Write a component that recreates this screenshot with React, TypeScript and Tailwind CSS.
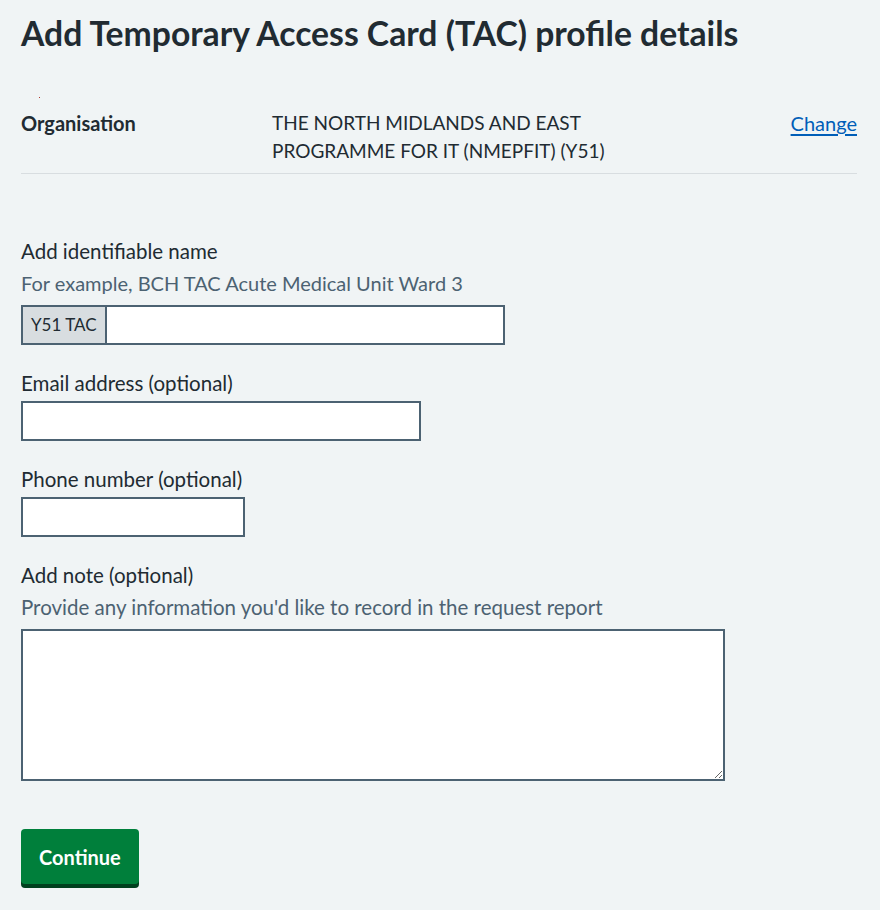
import type { ReactNode } from 'react';

const FONT = 'font-["Lato","Liberation_Sans",Arial,sans-serif]';

function Field({
  label,
  hint,
  hintClass = 'text-[20.5px]',
  children,
}: {
  label: string;
  hint?: string;
  hintClass?: string;
  children: ReactNode;
}) {
  return (
    <div className="mb-[24px]">
      <label className="mb-[4px] block text-[20.5px] leading-[28px] text-[#212b32]">{label}</label>
      {hint && <div className={`mb-[8px] leading-[28px] text-[#4c6272] ${hintClass}`}>{hint}</div>}
      {children}
    </div>
  );
}

export default function App() {
  return (
    <div className={`${FONT} min-h-[910px] bg-[#f0f4f5] pl-[21px] pr-[23px] pt-[13px] text-[#212b32]`}>
      <h1 className="text-[33.7px] font-bold leading-[40px]">Add Temporary Access Card (TAC) profile details</h1>

      <div className="relative mt-[56px]">
        <span className="absolute left-[18px] top-[-12px] h-[1px] w-[1px] bg-[#b03a2e]" />
        <dl className="flex border-b border-[#d8dde0] pb-[8px] leading-[28px]">
          <dt className="w-[251px] shrink-0 text-[20px] font-bold">Organisation</dt>
          <dd className="flex-1 text-[19px]">
            THE NORTH MIDLANDS AND EAST
            <br />
            PROGRAMME FOR IT (NMEPFIT) (Y51)
          </dd>
          <dd className="text-[20px]">
            <a href="#" className="text-[#005eb8] underline underline-offset-[3px]">
              Change
            </a>
          </dd>
        </dl>
      </div>

      <form className="mt-[63px]" onSubmit={(e) => e.preventDefault()}>
        <Field
          label="Add identifiable name"
          hint="For example, BCH TAC Acute Medical Unit Ward 3"
          hintClass="text-[20px]"
        >
          <div className="flex h-[40px] w-[484px]">
            <span className="flex items-center border-2 border-r-0 border-[#4c6272] bg-[#d8dde0] px-[8px] text-[17px]">
              Y51 TAC
            </span>
            <input className="flex-1 border-2 border-[#4c6272] bg-white px-2 outline-none" />
          </div>
        </Field>

        <Field label="Email address (optional)">
          <input className="block h-[40px] w-[400px] border-2 border-[#4c6272] bg-white px-2 outline-none" />
        </Field>

        <Field label="Phone number (optional)">
          <input className="block h-[40px] w-[224px] border-2 border-[#4c6272] bg-white px-2 outline-none" />
        </Field>

        <Field label="Add note (optional)" hint="Provide any information you'd like to record in the request report">
          <textarea className="block h-[152px] w-[704px] border-2 border-[#4c6272] bg-white px-2 outline-none" />
        </Field>

        <button
          type="submit"
          className="mt-[24px] rounded-[4px] bg-[#007f3b] px-[18px] pb-[13px] pt-[14px] text-[20px] font-bold leading-[28px] text-white shadow-[0_4px_0_#00401e]"
        >
          Continue
        </button>
      </form>
    </div>
  );
}
